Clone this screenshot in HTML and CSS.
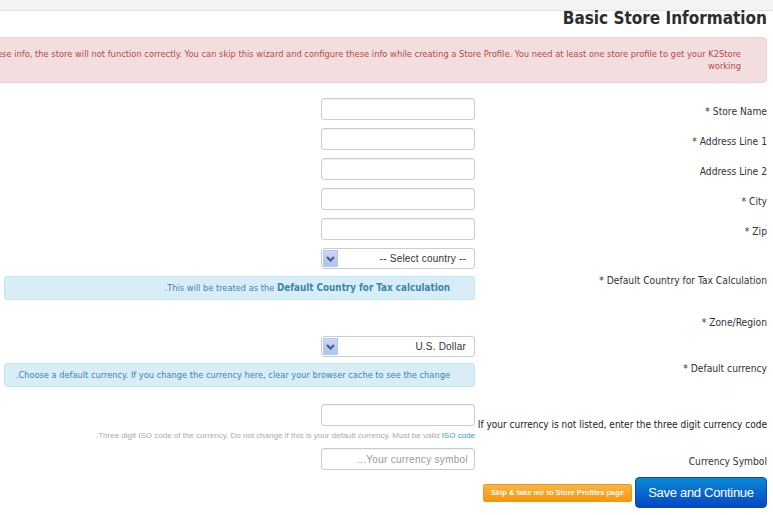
FILE: index.html
```html
<!DOCTYPE html>
<html lang="en" dir="rtl">
<head>
<meta charset="UTF-8">
<meta name="viewport" content="width=device-width, initial-scale=1.0">
<title>Store Setup Wizard</title>
<link rel="stylesheet" href="styles.css">
</head>
<body>
<div class="topbar"></div>
<div class="page">
    <h2 class="page-title">Basic Store Information</h2>

    <div class="alert alert-error">If you do not configure these info, the store will not function correctly. You can skip this wizard and configure these info while creating a Store Profile. You need at least one store profile to get your K2Store<br>working</div>

    <table class="store-form">
        <tr>
            <th>Store Name *</th>
            <td><input type="text" class="field"></td>
        </tr>
        <tr>
            <th>Address Line 1 *</th>
            <td><input type="text" class="field"></td>
        </tr>
        <tr>
            <th>Address Line 2</th>
            <td><input type="text" class="field"></td>
        </tr>
        <tr>
            <th>City *</th>
            <td><input type="text" class="field"></td>
        </tr>
        <tr>
            <th>Zip *</th>
            <td><input type="text" class="field"></td>
        </tr>
        <tr>
            <th>Default Country for Tax Calculation *</th>
            <td>
                <div class="select-box">
                    <select class="field-select">
                        <option>-- Select country --</option>
                    </select>
                    <span class="select-arrow">
                        <svg width="9" height="6" viewBox="0 0 9 6"><path d="M1 1 L4.5 4.5 L8 1" fill="none" stroke="#4a5a7e" stroke-width="2"/></svg>
                    </span>
                </div>
                <div class="info-box">This will be treated as the <strong>Default Country for Tax calculation</strong>.</div>
            </td>
        </tr>
        <tr class="zone-row">
            <th>Zone/Region *</th>
            <td></td>
        </tr>
        <tr>
            <th>Default currency *</th>
            <td>
                <div class="select-box">
                    <select class="field-select">
                        <option>U.S. Dollar</option>
                    </select>
                    <span class="select-arrow">
                        <svg width="9" height="6" viewBox="0 0 9 6"><path d="M1 1 L4.5 4.5 L8 1" fill="none" stroke="#4a5a7e" stroke-width="2"/></svg>
                    </span>
                </div>
                <div class="info-box info-currency">Choose a default currency. If you change the currency here, clear your browser cache to see the change.</div>
            </td>
        </tr>
        <tr class="code-row">
            <th class="long-label">If your currency is not listed, enter the three digit currency code</th>
            <td>
                <input type="text" class="field">
                <div class="help-text">Three digit ISO code of the currency. Do not change if this is your default currency. Must be valid <a href="#">ISO code</a>.</div>
            </td>
        </tr>
        <tr>
            <th>Currency Symbol</th>
            <td><input type="text" class="field" placeholder="Your currency symbol..."></td>
        </tr>
    </table>

    <div class="actions">
        <button class="btn-save">Save and Continue</button>
        <button class="btn-skip">Skip &amp; take me to Store Profiles page</button>
    </div>
</div>
</body>
</html>
```
FILE: styles.css
```css
:root {
    --ui-font: "DejaVu Sans Condensed", "Liberation Sans", sans-serif;
    --text-color: #333;
}

body {
    margin: 0;
    direction: rtl;
    font-family: var(--ui-font);
    font-size: 10px;
    color: var(--text-color);
    background: #fff;
    overflow: hidden;
}

.topbar {
    height: 10px;
    background: #f4f4f4;
    border-bottom: 1px solid #e2e2e2;
}

.page {
    padding: 0 6px 0 4px;
}

.page-title {
    margin: 0;
    font-family: "DejaVu Sans Condensed", "DejaVu Sans", sans-serif;
    font-size: 17px;
    line-height: 15px;
    font-weight: bold;
    color: #2d2d2d;
}

/* the message is longer than the page, it is cut at the left edge */
.alert {
    margin: 11px 0 0 -4px;
    padding: 10px 25px 10px 10px;
    font-size: 9.25px;
    line-height: 12px;
    white-space: nowrap;
    overflow: hidden;
    border-radius: 0 4px 4px 0;
}

.alert-error {
    background: #f2dede;
    border: 1px solid #eed3d7;
    border-left: 0;
    color: #b94a48;
}

.store-form {
    width: 100%;
    margin-top: 11px;
    border-collapse: collapse;
}

.store-form th {
    width: 292px;
    padding: 4px 0 0 0;
    text-align: right;
    font-size: 10.2px;
    font-weight: normal;
    vertical-align: middle;
    white-space: nowrap;
}

.store-form td {
    padding: 4px 0;
    vertical-align: middle;
}

.field {
    box-sizing: border-box;
    display: block;
    width: 154px;
    height: 22px;
    padding: 2px 6px;
    border: 1px solid #ccc;
    border-radius: 3px;
    box-shadow: inset 0 1px 1px rgba(0, 0, 0, 0.07);
    font-family: "Liberation Sans", sans-serif;
    font-size: 10px;
}

.field::placeholder {
    color: #999;
    letter-spacing: 0.3px;
}

.select-box {
    position: relative;
    width: 154px;
    height: 21px;
}

.field-select {
    box-sizing: border-box;
    width: 100%;
    height: 21px;
    padding: 0 8px 0 24px;
    border: 1px solid #ccc;
    border-radius: 3px;
    background: #fff;
    appearance: none;
    -webkit-appearance: none;
    font-family: "Liberation Sans", sans-serif;
    font-size: 10px;
    letter-spacing: 0.2px;
    color: #333;
}

.select-arrow {
    position: absolute;
    left: 2px;
    top: 2px;
    width: 15px;
    height: 17px;
    display: flex;
    align-items: center;
    justify-content: center;
    background: linear-gradient(#c9d6fb, #adc0f5);
    border: 1px solid #b7c6ee;
    box-sizing: border-box;
    pointer-events: none;
}

.info-box {
    margin: 7px 0 9px;
    padding: 5px 24px 5px 4px;
    font-size: 9.2px;
    line-height: 12px;
    white-space: nowrap;
    background: #d9edf7;
    border: 1px solid #bce8f1;
    border-radius: 3px;
    color: #3a87ad;
}

.info-box strong {
    font-size: 9.8px;
}

.info-currency {
    margin-top: 6px;
}

.zone-row th {
    padding: 0;
    height: 19px;
}

.code-row th.long-label {
    font-size: 10px;
    color: #222;
}

.help-text {
    margin-top: 5px;
    font-family: "Liberation Sans", sans-serif;
    font-size: 8px;
    line-height: 9px;
    color: #aaa;
}

.help-text a {
    color: #3a9ad9;
    text-decoration: none;
}

.actions {
    display: flex;
    align-items: center;
    gap: 3px;
    padding-top: 3px;
}

.btn-save {
    width: 132px;
    height: 31px;
    padding: 0;
    border: 1px solid #0a48b8;
    border-radius: 4px;
    background: linear-gradient(#0a8ad4, #0548c6);
    color: #fff;
    font-family: "Liberation Sans", sans-serif;
    font-size: 13px;
    letter-spacing: -0.3px;
    white-space: nowrap;
    cursor: pointer;
}

.btn-skip {
    width: 149px;
    height: 18px;
    padding: 0;
    border: 1px solid #e89a1f;
    border-radius: 2px;
    background: linear-gradient(#fbb545, #f8960a);
    color: #fff;
    font-family: "Liberation Sans", sans-serif;
    font-size: 7.5px;
    font-weight: bold;
    white-space: nowrap;
    text-shadow: 0 0 1px rgba(0, 0, 0, 0.15);
    cursor: pointer;
}
```
